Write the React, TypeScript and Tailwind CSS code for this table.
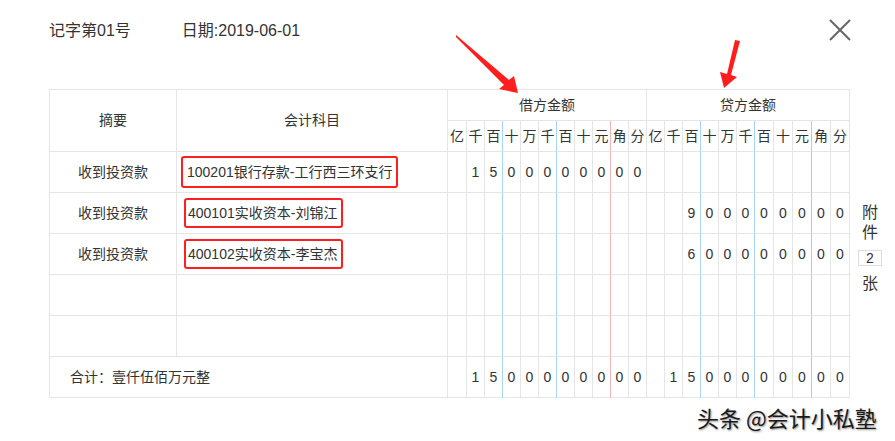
import React from 'react';

type Row = {
  summary: string;
  account: string;
  box: string;
  debit: string;
  credit: string;
};

const rows: Row[] = [
  {
    summary: '收到投资款',
    account: '100201银行存款-工行西三环支行',
    box: 'ml-[4px] h-[32px] pl-[4px] pr-[4px]',
    debit: '1500000000',
    credit: '',
  },
  {
    summary: '收到投资款',
    account: '400101实收资本-刘锦江',
    box: 'ml-[7px] h-[30px] pl-[2px] pr-[4px]',
    debit: '',
    credit: '900000000',
  },
  {
    summary: '收到投资款',
    account: '400102实收资本-李宝杰',
    box: 'ml-[7px] h-[30px] pl-[2px] pr-[4px]',
    debit: '',
    credit: '600000000',
  },
  { summary: '', account: '', box: '', debit: '', credit: '' },
  { summary: '', account: '', box: '', debit: '', credit: '' },
];

const units = ['亿', '千', '百', '十', '万', '千', '百', '十', '元', '角', '分'];

// right border of each digit column: blue after 百 and 千, red after 元
const lineCls = [
  'border-r-[#e5e5e5]',
  'border-r-[#e5e5e5]',
  'border-r-[#a8d5f3]',
  'border-r-[#e5e5e5]',
  'border-r-[#e5e5e5]',
  'border-r-[#a8d5f3]',
  'border-r-[#e5e5e5]',
  'border-r-[#e5e5e5]',
  'border-r-[#f2b4b4]',
  'border-r-[#e5e5e5]',
  'border-r-[#e5e5e5]',
];

const cell = 'border-r border-b border-r-[#e5e5e5] border-b-[#e5e5e5]';

function DigitCells({ value }: { value: string }) {
  const digits = value.padStart(11, ' ').split('');
  return (
    <>
      {digits.map((d, i) => (
        <div
          key={i}
          className={`flex items-center justify-center border-r border-b border-b-[#e5e5e5] ${lineCls[i]}`}
        >
          {d.trim()}
        </div>
      ))}
    </>
  );
}

export default function App() {
  return (
    <div
      className="relative h-[441px] w-[895px] overflow-hidden bg-white text-[#333]"
      style={{ fontFamily: '"Liberation Sans", "Noto Sans CJK SC", sans-serif' }}
    >
      <div className="ml-[49px] flex h-[42px] w-[802px] items-start justify-between pt-[20px]">
        <div className="flex gap-[51px] text-[16px] leading-[22px]">
          <span>记字第01号</span>
          <span>日期:2019-06-01</span>
        </div>
        <svg width="22" height="22" viewBox="0 0 22 22" className="-mt-[1px]">
          <path d="M1 1L21 21M21 1L1 21" stroke="#666" strokeWidth="2" fill="none" />
        </svg>
      </div>

      <div className="ml-[49px] mt-[47px] flex items-start">
        <div className="grid grid-cols-[127px_271px_19px_repeat(16,18px)_repeat(5,19px)] grid-rows-[31px_31px_repeat(6,41px)] border-l border-t border-[#e5e5e5] text-[14px]">
          <div className={`row-span-2 flex items-center justify-center ${cell}`}>摘要</div>
          <div className={`row-span-2 flex items-center justify-center ${cell}`}>会计科目</div>
          <div className={`col-span-11 flex items-center justify-center ${cell}`}>借方金额</div>
          <div className={`col-span-11 flex items-center justify-center ${cell}`}>贷方金额</div>
          {[...units, ...units].map((u, i) => (
            <div
              key={i}
              className={`flex items-center justify-center border-r border-b border-b-[#e5e5e5] ${lineCls[i % 11]}`}
            >
              {u}
            </div>
          ))}

          {rows.map((r, i) => (
            <React.Fragment key={i}>
              <div className={`flex items-center justify-center ${cell}`}>{r.summary}</div>
              <div className={`flex items-center ${cell}`}>
                {r.account && (
                  <span
                    className={`flex items-center rounded-[3px] border-2 border-[#ff1f1f] ${r.box}`}
                  >
                    {r.account}
                  </span>
                )}
              </div>
              <DigitCells value={r.debit} />
              <DigitCells value={r.credit} />
            </React.Fragment>
          ))}

          <div className={`col-span-2 flex items-center pl-[20px] ${cell}`}>合计：壹仟伍佰万元整</div>
          <DigitCells value="1500000000" />
          <DigitCells value="1500000000" />
        </div>

        <div className="flex w-[40px] flex-col items-center pt-[114px] text-[16px] leading-[20px]">
          <span>附</span>
          <span>件</span>
          <span className="mt-[7px] flex h-[16px] w-[24px] items-center justify-center border border-[#dcdcdc] text-[14px] leading-[14px]">
            2
          </span>
          <span className="mt-[8px]">张</span>
        </div>
      </div>

      <svg
        className="pointer-events-none absolute left-0 top-0"
        width="895"
        height="441"
        viewBox="0 0 895 441"
      >
        <polygon
          points="456,35 509,80 514,76 518,93 499,89 504,85 456,37"
          fill="#fe1e1e"
        />
        <polygon
          points="735,40 740,41 731,75 737,77 724,88 720,72 727,74"
          fill="#fe1e1e"
        />
      </svg>

      <div
        className="absolute left-[697px] top-[404px] text-[22px] leading-[26px] text-[#1a1a1a] [text-shadow:1px_1px_2px_rgba(0,0,0,0.45)]"
        style={{ fontFamily: '"Noto Sans CJK SC", sans-serif' }}
      >
        头条 @会计小私塾
      </div>
    </div>
  );
}
